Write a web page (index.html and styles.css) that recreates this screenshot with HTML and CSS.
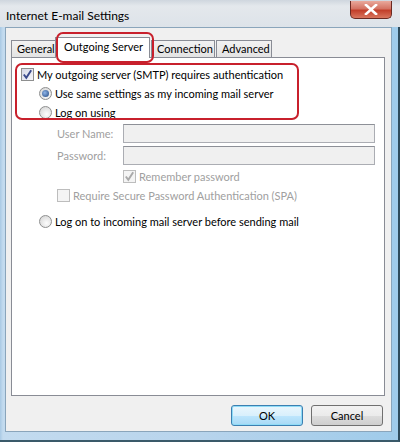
FILE: index.html
```html
<!DOCTYPE html>
<html>
<head>
<meta charset="utf-8">
<link rel="stylesheet" href="styles.css">
</head>
<body>
<div class="window">
  <div class="titlebar">
    <span class="title">Internet E-mail Settings</span>
    <div class="close">
      <svg width="14" height="11" viewBox="0 0 14 11"><path d="M2 1 L12 10 M12 1 L2 10" stroke="#fff" stroke-width="2.6" stroke-linecap="square"/></svg>
    </div>
  </div>
  <div class="client">
    <div class="tabs">
      <div class="tab tab-general">General</div>
      <div class="tab tab-active">Outgoing Server</div>
      <div class="tab tab-conn">Connection</div>
      <div class="tab tab-adv">Advanced</div>
    </div>
    <div class="panel">
      <div class="row">
        <span class="check checked"><svg width="11" height="11" viewBox="0 0 11 11"><path d="M1.8 5.5 L4.3 8.8 L9.2 1.2" fill="none" stroke="#3a4a8c" stroke-width="1.9"/></svg></span>
        <span>My outgoing server (SMTP) requires authentication</span>
      </div>
      <div class="row indent1">
        <span class="radio selected"><span class="dot"></span></span>
        <span>Use same settings as my incoming mail server</span>
      </div>
      <div class="row indent1">
        <span class="radio"></span>
        <span>Log on using</span>
      </div>
      <div class="field first">
        <span class="flabel">User Name:</span>
        <span class="input"></span>
      </div>
      <div class="field">
        <span class="flabel">Password:</span>
        <span class="input"></span>
      </div>
      <div class="row indent3 disabled">
        <span class="check dis"><svg width="11" height="11" viewBox="0 0 11 11"><path d="M1.8 5.5 L4.3 8.8 L9.2 1.2" fill="none" stroke="#a9a9a9" stroke-width="1.9"/></svg></span>
        <span>Remember password</span>
      </div>
      <div class="row indent2 disabled">
        <span class="check dis"></span>
        <span>Require Secure Password Authentication (SPA)</span>
      </div>
      <div class="row indent1 last">
        <span class="radio"></span>
        <span>Log on to incoming mail server before sending mail</span>
      </div>
    </div>
    <div class="buttons">
      <div class="btn btn-ok">OK</div>
      <div class="btn">Cancel</div>
    </div>
  </div>
  <div class="mark mark-tab"></div>
  <div class="mark mark-auth"></div>
</div>
</body>
</html>
```

FILE: styles.css
```css
html, body {
  margin: 0;
  padding: 0;
  width: 400px;
  height: 442px;
  overflow: hidden;
  background: #ffffff;
}
.window {
  position: relative;
  width: 400px;
  height: 442px;
  box-sizing: border-box;
  background: linear-gradient(to right, #a9c9e4 0px, #c3dbef 3px, #b8d4ec 50%, #9fcbea 100%);
  border-right: 2px solid #2e4b5c;
  border-bottom: 2px solid #3a5a6a;
  display: flex;
  flex-direction: column;
  font-family: "Lato", "Open Sans", sans-serif;
  font-size: 11px;
  color: #000;
  white-space: nowrap;
}
.titlebar {
  height: 27px;
  display: flex;
  align-items: center;
  position: relative;
  background: linear-gradient(to bottom, #cfd6de 0px, #e4e8ec 6px, #dde3e9 100%);
  margin: 0 -2px 0 0;
}
.title {
  padding-left: 6px;
  padding-top: 3px;
  font-size: 12px;
}
.close {
  position: absolute;
  left: 350px;
  top: 1px;
  width: 42px;
  height: 18px;
  box-sizing: border-box;
  border: 1px solid #6b2a22;
  border-top: none;
  border-radius: 0 0 5px 5px;
  background: linear-gradient(to bottom, #e9a99c 0%, #d47363 45%, #c23f2a 55%, #d9765e 100%);
  display: flex;
  align-items: center;
  justify-content: center;
}
.client {
  margin: 0 6px 8px 5px;
  flex: 1;
  background: #f0f0f0;
  border: 1px solid #8aa5bb;
  padding: 9px 6px 0 5px;
  display: flex;
  flex-direction: column;
}
.tabs {
  display: flex;
  align-items: flex-end;
  height: 20px;
  position: relative;
  z-index: 1;
}
.tab {
  height: 17px;
  box-sizing: border-box;
  border: 1px solid #898c95;
  border-bottom: none;
  background: linear-gradient(to bottom, #f2f2f2, #e3e3e3);
  padding: 0 5px;
  line-height: 16px;
  margin-right: -1px;
}
.tab-general { width: 46px; }
.tab-active {
  height: 21px;
  background: #ffffff;
  width: 95px;
  margin: 0 -1px 0 -1px;
  padding-left: 8px;
  line-height: 18px;
  margin-bottom: -1px;
  position: relative;
  z-index: 2;
}
.tab-conn { width: 64px; margin-left: 2px; }
.tab-adv { width: 56px; margin-left: 2px; }
.panel {
  height: 339px;
  box-sizing: border-box;
  background: #ffffff;
  border: 1px solid #898c95;
  padding: 7px 0 0 9px;
}
.row {
  height: 19px;
  display: flex;
  align-items: center;
  gap: 3px;
}
.indent1 { padding-left: 18px; }
.indent2 { padding-left: 36px; }
.indent3 { padding-left: 102px; }
.last { margin-top: 7px; }
.disabled { color: #a0a0a0; }
.check {
  width: 13px;
  height: 13px;
  box-sizing: border-box;
  border: 1px solid #8e8f8f;
  background: linear-gradient(135deg, #dcdcdc, #fbfbfb);
  display: flex;
  align-items: center;
  justify-content: center;
}
.check.checked { background: linear-gradient(135deg, #d6d8e6, #f6f6fb); }
.check.dis { border-color: #bdbdbd; background: #f4f4f4; }
.radio {
  width: 13px;
  height: 13px;
  box-sizing: border-box;
  border-radius: 50%;
  border: 1px solid #8e8f8f;
  background: radial-gradient(circle at 60% 65%, #fdfdfd, #d0d0d0);
  display: flex;
  align-items: center;
  justify-content: center;
}
.dot {
  width: 7px;
  height: 7px;
  border-radius: 50%;
  background: radial-gradient(circle at 40% 40%, #8fb5e8, #20467f);
}
.field {
  height: 18px;
  display: flex;
  align-items: center;
  margin-top: 4px;
  padding-left: 36px;
  color: #a0a0a0;
}
.field.first { margin-top: 2px; }
.flabel { width: 66px; }
.input {
  width: 252px;
  height: 19px;
  box-sizing: border-box;
  border: 1px solid #abadb3;
  border-top-color: #8d9097;
  background: #f0f0f0;
}
.field + .row { margin-top: 3px; }
.buttons {
  display: flex;
  justify-content: flex-end;
  gap: 8px;
  padding: 9px 2px 0 0;
}
.btn {
  width: 72px;
  height: 21px;
  box-sizing: border-box;
  border: 1px solid #707070;
  border-radius: 3px;
  background: linear-gradient(to bottom, #f2f2f2 0%, #ebebeb 50%, #dddddd 51%, #cfcfcf 100%);
  display: flex;
  align-items: center;
  justify-content: center;
}
.btn-ok {
  border-color: #3c7fb1;
  background: linear-gradient(to bottom, #eaf6fd 0%, #d9f0fc 50%, #bee6fd 51%, #a7d9f5 100%);
  box-shadow: inset 0 0 0 1px #8fdcf7;
}
.mark {
  position: absolute;
  box-sizing: border-box;
  border: 2px solid #c8202c;
  border-radius: 7px;
  pointer-events: none;
  z-index: 5;
}
.mark-tab {
  left: 56px;
  top: 32px;
  width: 98px;
  height: 31px;
}
.mark-auth {
  left: 15px;
  top: 63px;
  width: 284px;
  height: 57px;
}
```
